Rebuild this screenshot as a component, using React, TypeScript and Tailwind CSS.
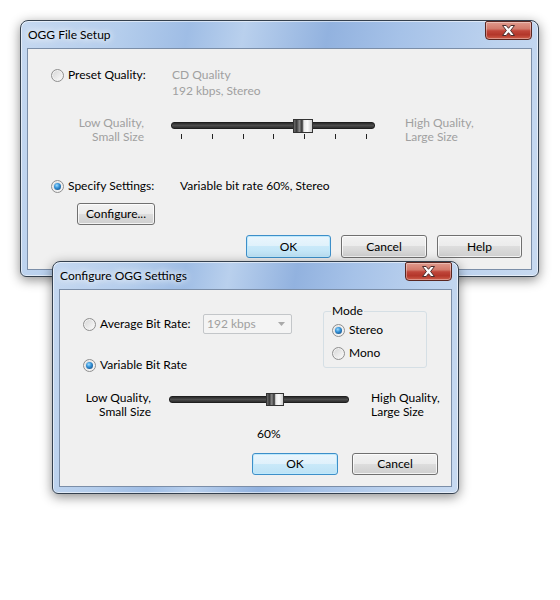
import type { ReactNode } from 'react';

function Radio({ checked }: { checked?: boolean }) {
  return (
    <span className="flex h-[13px] w-[13px] shrink-0 items-center justify-center rounded-full border border-[#8f8f8f] bg-[linear-gradient(135deg,#d4d4d4,#fdfdfd)] shadow-[inset_0_0_0_1px_#f2f2f2]">
      {checked && (
        <span className="h-[7px] w-[7px] rounded-full bg-[radial-gradient(circle_at_40%_35%,#9fdcff_0%,#3593d8_40%,#1a5892_80%,#143a60_100%)]" />
      )}
    </span>
  );
}

function Button({ children, primary, className }: { children: ReactNode; primary?: boolean; className: string }) {
  const look = primary
    ? 'border-[#3d8fc9] bg-[linear-gradient(#eaf6fd_0%,#dff1fb_50%,#c9e9f9_50%,#bde2f5_100%)] shadow-[inset_0_0_0_1px_#bfe9fc]'
    : 'border-[#707070] bg-[linear-gradient(#f2f2f2_0%,#ebebeb_50%,#dddddd_50%,#cfcfcf_100%)] shadow-[inset_0_0_0_1px_rgba(255,255,255,0.75)]';
  return (
    <div className={`flex shrink-0 items-center justify-center rounded-[3px] border ${look} ${className}`}>
      {children}
    </div>
  );
}

function CloseButton() {
  return (
    <div className="absolute right-0 top-0 flex h-[19px] w-[47px] items-center justify-center rounded-b-[4px] rounded-t-[2px] border border-[#5a2620] bg-[linear-gradient(#e09a8d_0%,#d27a6b_40%,#c0463a_52%,#b3362a_75%,#cf5f4b_100%)] shadow-[inset_0_0_0_1px_rgba(255,255,255,0.35)]">
      <svg width="13" height="11" viewBox="0 0 13 11">
        <path
          d="M0.5 0.5H4.2L6.5 3.3L8.8 0.5H12.5L8.6 5.5L12.5 10.5H8.8L6.5 7.7L4.2 10.5H0.5L4.4 5.5Z"
          fill="#fff"
          stroke="#4a2c2c"
          strokeWidth="1"
          strokeLinejoin="round"
        />
      </svg>
    </div>
  );
}

function Window({ title, className, children }: { title: string; className: string; children: ReactNode }) {
  return (
    <div
      className={`absolute flex flex-col rounded-t-[8px] rounded-b-[6px] border border-[#34404e] bg-[linear-gradient(100deg,#c5d8f0_0%,#b4cdec_18%,#9fbde5_30%,#b9d0ed_40%,#92b2df_55%,#a6c2e8_68%,#bcd2ee_85%,#c8daf1_100%)] px-[6px] pb-[6px] shadow-[inset_0_0_0_1px_rgba(255,255,255,0.55),0_3px_12px_rgba(0,0,0,0.45)] ${className}`}
    >
      <div className="relative flex h-[27px] shrink-0 items-center pl-[1px]">
        <span className="[text-shadow:0_0_6px_#fff,0_0_10px_#fff]">{title}</span>
        <CloseButton />
      </div>
      <div className="flex flex-1 flex-col border border-[#7b8ea8] bg-[#f0f0f0]">{children}</div>
    </div>
  );
}

function Slider({ trackClass, thumbClass, ticks }: { trackClass: string; thumbClass: string; ticks?: boolean }) {
  return (
    <div className={`relative shrink-0 ${trackClass}`}>
      <div className="h-[7px] rounded-[3px] border border-[#1f1f1f] bg-[linear-gradient(#2b2b2b,#4d4d4d_50%,#2e2e2e)]" />
      {ticks && (
        <div className="mt-[5px] flex justify-between pl-[10px] pr-[8px]">
          {Array.from({ length: 7 }).map((_, i) => (
            <span key={i} className="h-[5px] w-px bg-[#222]" />
          ))}
        </div>
      )}
      <div
        className={`absolute border border-[#333] bg-[linear-gradient(90deg,#6b6b6b_0%,#3a3a3a_15%,#8a8a8a_30%,#2f2f2f_45%,#e9e9e9_55%,#fafafa_75%,#cfcfcf_100%)] ${thumbClass}`}
      />
    </div>
  );
}

export default function App() {
  return (
    <div className="relative h-[600px] w-[560px] overflow-hidden bg-white font-['Lato',sans-serif] text-[12px] text-black">
      <Window title="OGG File Setup" className="left-[20px] top-[20px] h-[257px] w-[519px]">
        <div className="flex flex-col pt-[18px]">
          <div className="flex pl-[23px]">
            <div className="flex h-4 items-center">
              <Radio />
            </div>
            <span className="ml-[4px] w-[104px] leading-4">Preset Quality:</span>
            <div className="flex flex-col leading-4 text-[#a0a0a0]">
              <span>CD Quality</span>
              <span>192 kbps, Stereo</span>
            </div>
          </div>

          <div className="mt-[17px] flex">
            <div className="w-[116px] text-right leading-[14px] text-[#a0a0a0]">
              <div>Low Quality,</div>
              <div>Small Size</div>
            </div>
            <Slider trackClass="ml-[27px] mt-[6px] w-[204px]" thumbClass="left-[122px] top-[-3px] h-[14px] w-[20px]" ticks />
            <div className="ml-[30px] leading-[14px] text-[#a0a0a0]">
              <div>High Quality,</div>
              <div>Large Size</div>
            </div>
          </div>

          <div className="mt-[34px] flex pl-[23px]">
            <div className="flex h-4 items-center">
              <Radio checked />
            </div>
            <span className="ml-[4px] w-[112px] leading-4">Specify Settings:</span>
            <span className="leading-4">Variable bit rate 60%, Stereo</span>
          </div>

          <div className="mt-[9px] flex pl-[49px]">
            <Button className="h-[22px] w-[78px]">Configure...</Button>
          </div>

          <div className="mt-[10px] flex justify-end gap-[10px] pr-[9px]">
            <Button primary className="h-[23px] w-[85px]">OK</Button>
            <Button className="h-[23px] w-[86px]">Cancel</Button>
            <Button className="h-[23px] w-[85px]">Help</Button>
          </div>
        </div>
      </Window>

      <Window title="Configure OGG Settings" className="left-[52px] top-[261px] h-[233px] w-[407px]">
        <div className="flex items-start">
          <div className="flex flex-col pt-[24px]">
            <div className="flex h-[20px] items-center pl-[23px]">
              <Radio />
              <span className="ml-[4px] w-[103px]">Average Bit Rate:</span>
              <div className="flex h-[20px] w-[89px] items-center justify-between rounded-[2px] border border-[#c3c6c9] bg-[#f4f4f4] pl-[3px] pr-[6px] text-[#a0a0a0]">
                <span>192 kbps</span>
                <svg width="7" height="4" viewBox="0 0 7 4">
                  <path d="M0 0H7L3.5 4Z" fill="#a9a9a9" />
                </svg>
              </div>
            </div>
            <div className="mt-[23px] flex h-4 items-center pl-[23px]">
              <Radio checked />
              <span className="ml-[4px]">Variable Bit Rate</span>
            </div>
          </div>
          <fieldset className="ml-[31px] mt-[13px] w-[104px] rounded-[3px] border border-[#d5dfe5] pb-[6px] pl-[8px]">
            <legend className="ml-[-1px] px-[1px] leading-4">Mode</legend>
            <div className="mt-[3px] flex h-4 items-center">
              <Radio checked />
              <span className="ml-[4px]">Stereo</span>
            </div>
            <div className="mt-[7px] flex h-4 items-center">
              <Radio />
              <span className="ml-[4px]">Mono</span>
            </div>
          </fieldset>
        </div>

        <div className="mt-[18px] flex">
          <div className="w-[91px] text-right leading-[14px]">
            <div>Low Quality,</div>
            <div>Small Size</div>
          </div>
          <Slider trackClass="ml-[18px] mt-[5px] w-[180px]" thumbClass="left-[97px] top-[-3px] h-[13px] w-[18px]" />
          <div className="ml-[22px] leading-[14px]">
            <div>High Quality,</div>
            <div>Large Size</div>
          </div>
        </div>

        <div className="mt-[7px] pl-[197px] leading-4">60%</div>

        <div className="mt-[11px] flex justify-end gap-[14px] pr-[13px]">
          <Button primary className="h-[22px] w-[86px]">OK</Button>
          <Button className="h-[22px] w-[86px]">Cancel</Button>
        </div>
      </Window>
    </div>
  );
}
